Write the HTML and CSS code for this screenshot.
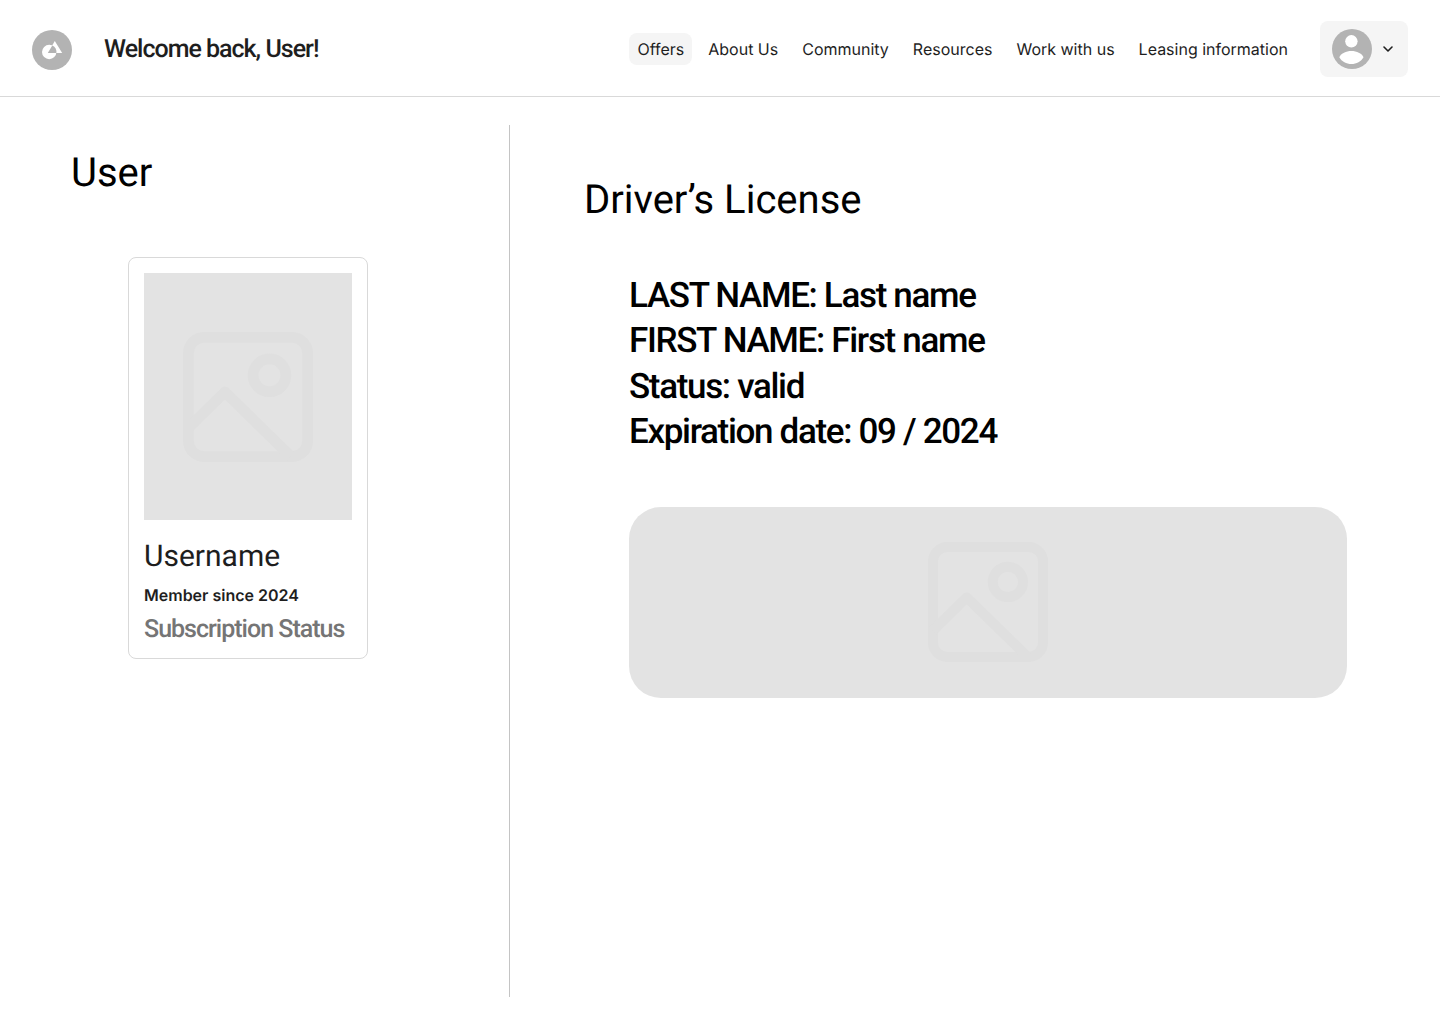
FILE: index.html
```html
<!DOCTYPE html>
<html lang="en">
<head>
<meta charset="utf-8">
<title>User profile</title>
<link rel="stylesheet" href="styles.css">
</head>
<body>
<svg class="sprite" aria-hidden="true">
  <symbol id="picture" viewBox="0 0 130 130">
    <g fill="none" stroke="currentColor" stroke-width="10.8" stroke-linejoin="round">
      <rect x="5.4" y="5.4" width="119.2" height="119.2" rx="15.6"/>
      <circle cx="86.5" cy="43.3" r="16.4"/>
      <path d="M5.4 96 41.9 60 108 124.6"/>
    </g>
  </symbol>
</svg>
<header class="topbar">
  <svg class="logo" viewBox="0 0 40 40" aria-label="Logo">
    <circle cx="20" cy="20" r="20" fill="#b3b3b3"/>
    <circle cx="17.2" cy="22" r="7.2" fill="#fff"/>
    <path d="M22.8 11 30.2 23H15.8z" fill="#fff"/>
    <path d="M20.3 15.5A7.2 7.2 0 0 1 24.3 23H15.8z" fill="#b3b3b3"/>
  </svg>
  <p class="welcome">Welcome back, User!</p>
  <nav class="nav">
    <a class="nav-link active">Offers</a>
    <a class="nav-link">About Us</a>
    <a class="nav-link">Community</a>
    <a class="nav-link">Resources</a>
    <a class="nav-link">Work with us</a>
    <a class="nav-link">Leasing information</a>
  </nav>
  <button class="account" aria-label="Account">
    <svg class="avatar" viewBox="0 0 40 40">
      <circle cx="20" cy="20" r="20" fill="#b3b3b3"/>
      <circle cx="19.4" cy="12.3" r="6.2" fill="#fff"/>
      <path d="M7.300 28.200C9.200 24.300 14 22 19.400 22s10.200 2.300 12.100 6.200C29 32.500 24.500 35 19.400 35S9.800 32.500 7.300 28.200z" fill="#fff"/>
    </svg>
    <svg class="chevron" viewBox="0 0 16 16">
      <path d="M4 6l4 4 4-4" fill="none" stroke="#1e1e1e" stroke-width="1.6" stroke-linecap="round" stroke-linejoin="round"/>
    </svg>
  </button>
</header>
<main class="page">
  <section class="profile">
    <h1 class="title">User</h1>
    <article class="card">
      <div class="card-picture"><svg class="picture-large"><use href="#picture"/></svg></div>
      <h2 class="username">Username</h2>
      <p class="member">Member since 2024</p>
      <p class="subscription">Subscription Status</p>
    </article>
  </section>
  <section class="license">
    <h1 class="title">Driver’s License</h1>
    <ul class="details">
      <li>LAST NAME: Last name</li>
      <li>FIRST NAME: First name</li>
      <li>Status: valid</li>
      <li>Expiration date: 09 / 2024</li>
    </ul>
    <div class="license-picture"><svg class="picture-small"><use href="#picture"/></svg></div>
  </section>
</main>
</body>
</html>
```
FILE: styles.css
```css
* {
  box-sizing: border-box;
}

body,
h1,
h2,
p,
ul {
  margin: 0;
  padding: 0;
  font-weight: 400;
}

body {
  height: 1024px;
  display: flex;
  flex-direction: column;
  background: #fff;
  color: #1e1e1e;
  font-family: Roboto, sans-serif;
  text-rendering: geometricPrecision;
}

.sprite {
  display: none;
}

.topbar {
  height: 97px;
  display: flex;
  align-items: center;
  padding: 1px 32px 0;
  border-bottom: 1px solid #d9d9d9;
}

.logo {
  width: 40px;
  height: 40px;
  margin: 3px 32px 0 0;
}

.welcome {
  padding-top: 2px;
  font-size: 25px;
  font-weight: 500;
  line-height: 32px;
  letter-spacing: -0.04em;
}

.nav {
  display: flex;
  gap: 8px;
  margin-left: auto;
}

.nav-link {
  padding: 8px;
  border-radius: 8px;
  font: 370 16px/16px Inter, sans-serif;
  white-space: nowrap;
}

.nav-link.active {
  background: #f5f5f5;
}

.account {
  width: 88px;
  height: 56px;
  display: flex;
  align-items: center;
  gap: 8px;
  margin-left: 24px;
  padding: 0 12px;
  border: 0;
  border-radius: 8px;
  background: #f5f5f5;
}

.avatar {
  width: 40px;
  height: 40px;
}

.chevron {
  width: 16px;
  height: 16px;
}

.page {
  flex: 1;
  display: flex;
  padding: 28px 93px 27px 71px;
}

.title {
  color: #000;
  font-size: 40px;
  line-height: 48px;
}

.profile {
  width: 439px;
  padding-top: 24px;
  border-right: 1px solid #c4c4c4;
}

.card {
  width: 240px;
  height: 402px;
  margin: 60px 0 0 57px;
  padding: 15px;
  border: 1px solid #d9d9d9;
  border-radius: 8px;
}

.card-picture {
  height: 247px;
  display: grid;
  place-items: center;
  background: #e3e3e3;
  color: #dfdfdf;
}

.picture-large {
  width: 130px;
  height: 130px;
}

.username {
  margin-top: 17px;
  font-size: 30px;
  line-height: 40px;
}

.member {
  margin-top: 7px;
  font: 600 16px/22px Inter, sans-serif;
}

.subscription {
  margin-top: 9px;
  color: #757575;
  font-size: 25px;
  font-weight: 500;
  line-height: 30px;
  letter-spacing: -0.04em;
  white-space: nowrap;
}

.license {
  flex: 1;
  padding: 51px 0 0 74px;
}

.details {
  margin: 49px 0 0 45px;
  color: #000;
  font-size: 35px;
  font-weight: 500;
  line-height: 45.4px;
  letter-spacing: -1.33px;
  list-style: none;
}

.license-picture {
  height: 191px;
  display: grid;
  place-items: center;
  margin: 52px 0 0 45px;
  border-radius: 32px;
  background: #e3e3e3;
  color: #dfdfdf;
}

.picture-small {
  width: 120px;
  height: 120px;
}
```
